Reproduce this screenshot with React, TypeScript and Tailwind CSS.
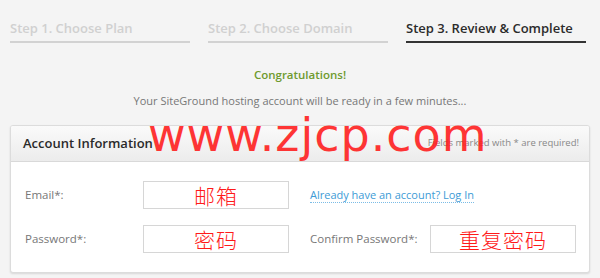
import React from 'react';

const steps = [
  { label: 'Step 1. Choose Plan', active: false },
  { label: 'Step 2. Choose Domain', active: false },
  { label: 'Step 3. Review & Complete', active: true },
];

const Field = ({ value }: { value: string }) => (
  <div className="w-[146px] h-[28px] border border-[#d6d6d6] bg-white flex items-center justify-center text-[#ff1a1a] text-[21px] leading-none tracking-[1px] [font-family:'Noto_Sans_CJK_SC',sans-serif] font-light">
    {value}
  </div>
);

export default function App() {
  return (
    <div className="w-[600px] h-[278px] overflow-hidden bg-[#f4f4f4] relative [font-family:'Open_Sans',sans-serif]">
      {/* Steps */}
      <div className="flex gap-[18px] px-[10px] pt-[19px]">
        {steps.map((s) => (
          <div
            key={s.label}
            className={`w-[180px] h-[24px] border-b-2 text-[13px] font-semibold leading-[18px] ${
              s.active ? 'border-[#333] text-[#2b2b2b]' : 'border-[#d2d2d2] text-[#d0d0d0]'
            }`}
          >
            {s.label}
          </div>
        ))}
      </div>

      {/* Message */}
      <div className="text-center mt-[24px] text-[11.5px] font-semibold text-[#6f9a2e] leading-[16px]">
        Congratulations!
      </div>
      <div className="text-center mt-[10px] text-[11px] text-[#777] leading-[16px]">
        Your SiteGround hosting account will be ready in a few minutes...
      </div>

      {/* Panel */}
      <div className="mx-[10px] mt-[16px] w-[580px] h-[148px] border border-[#dcdcdc] rounded-[3px] bg-white shadow-[0_1px_2px_rgba(0,0,0,0.12)] overflow-hidden">
        <div className="h-[36px] bg-gradient-to-b from-[#fafafa] to-[#ececec] border-b border-[#d9d9d9] flex items-center justify-between pl-[12px] pr-[10px]">
          <span className="text-[13px] font-semibold text-[#2a2a2a]">Account Information</span>
          <span className="text-[9.5px] text-[#888]">Fields marked with * are required!</span>
        </div>
        <div className="pl-[14px] pt-[19px] flex flex-col gap-[16px]">
          <div className="flex items-center h-[28px]">
            <span className="w-[118px] text-[11.5px] text-[#777]">Email*:</span>
            <Field value="邮箱" />
            <a className="ml-[21px] text-[11px] text-[#3d9bd6] border-b border-dotted border-[#7bbce6] leading-[15px]">
              Already have an account? Log In
            </a>
          </div>
          <div className="flex items-center h-[28px]">
            <span className="w-[118px] text-[11.5px] text-[#777]">Password*:</span>
            <Field value="密码" />
            <span className="ml-[21px] w-[120px] text-[11.5px] text-[#777]">Confirm Password*:</span>
            <Field value="重复密码" />
          </div>
        </div>
      </div>

      {/* Watermark */}
      <div className="absolute left-[148px] top-[112px] text-[#ff2020] text-[46px] leading-none tracking-[1px] [font-family:'DejaVu_Sans',sans-serif] opacity-90 pointer-events-none">
        www.zjcp.com
      </div>
    </div>
  );
}
